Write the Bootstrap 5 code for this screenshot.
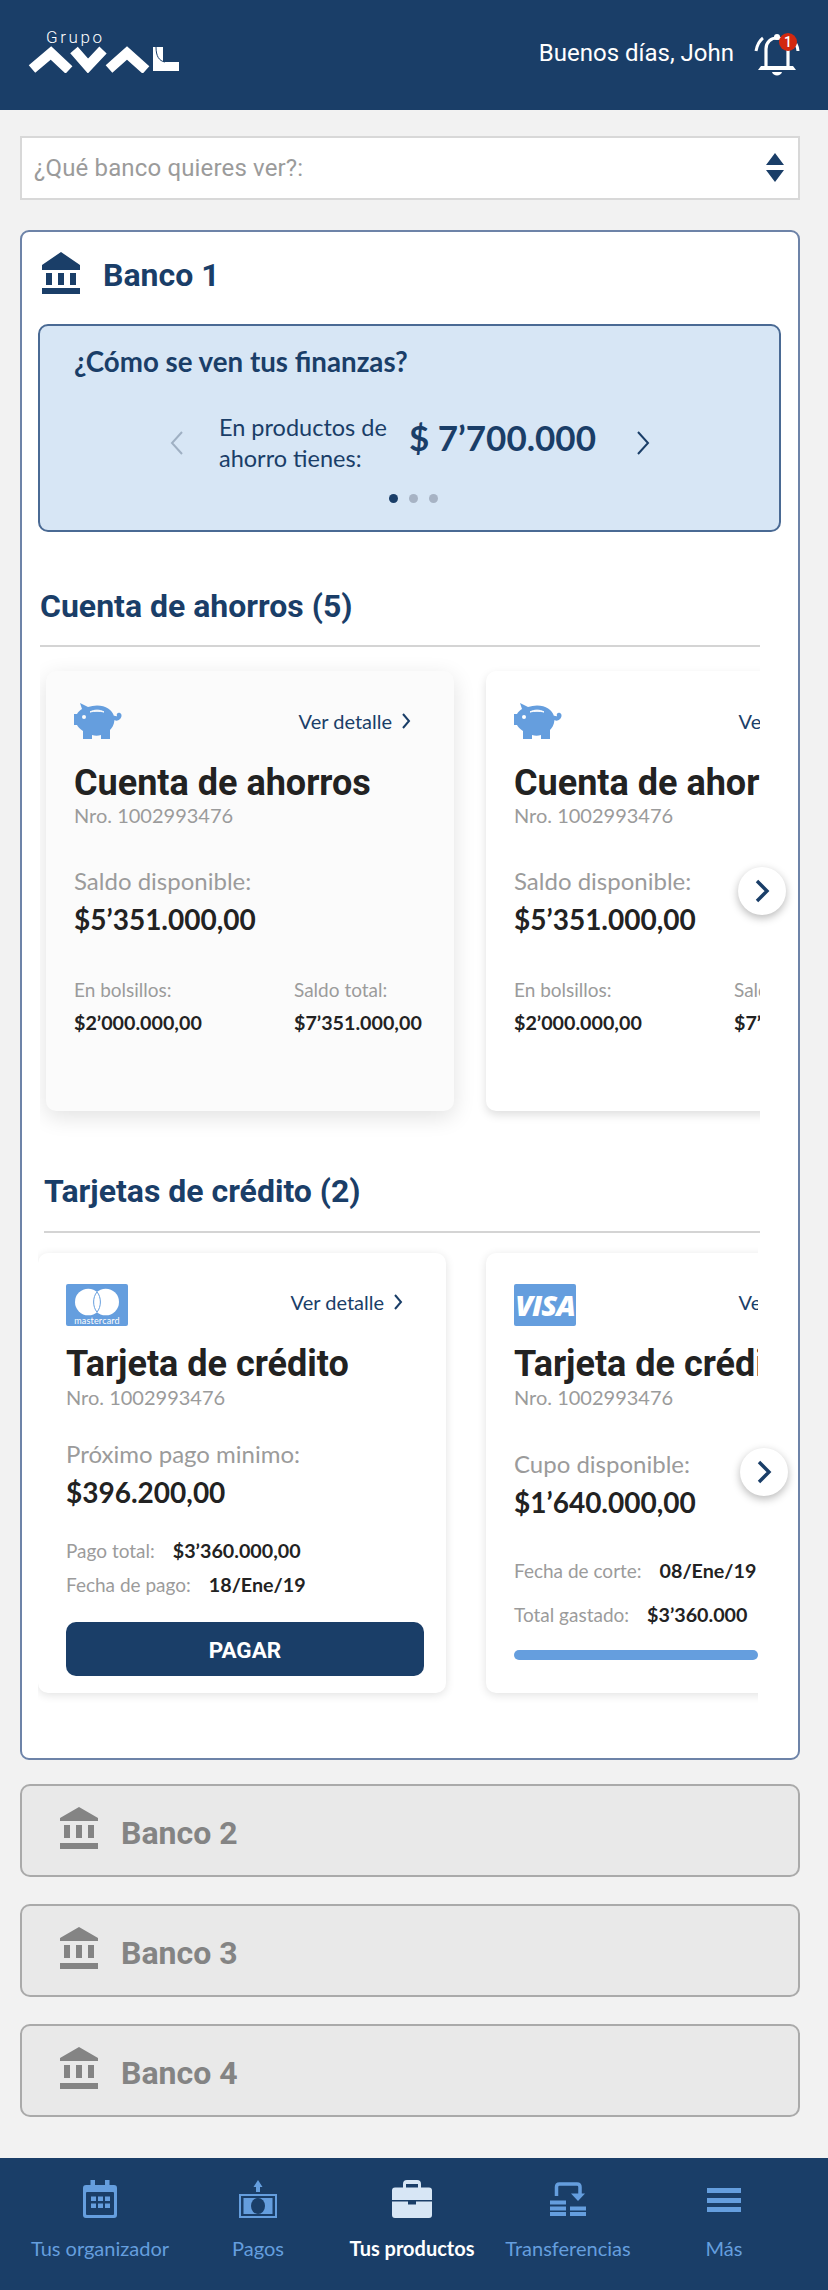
<!DOCTYPE html>
<html lang="es">
<head>
  <title>Grupo Aval - Tus productos</title>
  <meta charset="UTF-8">
  <meta name="viewport" content="width=device-width, initial-scale=1.0">
  <link href="https://cdn.jsdelivr.net/npm/bootstrap@5.3.0/dist/css/bootstrap.min.css" rel="stylesheet">
  <style>
    :root { --navy: #1a3e68; --sky: #659ede; --grey: #9b9b9b; --ink: #222; }
    body { width: 828px; height: 2290px; background: #f2f2f2; font-family: "Lato", sans-serif; color: var(--ink); overflow: hidden; }
    .app-top { height: 110px; background: var(--navy); padding: 29px 28px 0 28px; color: #fff; flex: none; }
    .logo-word { font: 300 17px/16px "Roboto", sans-serif; letter-spacing: 2.6px; margin-left: 18px; }
    .hello { font: 400 24px/32px "Roboto", sans-serif; margin-top: 3px; }
    .bell-wrap { position: relative; width: 46px; height: 46px; margin-left: 20px; }
    .bell-count { position: absolute; top: -1px; right: 3px; width: 18px; height: 18px; border-radius: 50%; background: #d2280f; color: #fff; font: 500 14px/18px "Roboto", sans-serif; text-align: center; }
    .main-col { padding: 26px 28px 0 20px; }
    .bank-pick { height: 64px; background: #fff; border: 2px solid #d8d8d8; padding: 0 14px 0 12px; font: 400 24px/30px "Roboto", sans-serif; letter-spacing: .15px; color: var(--grey); }
    .bank-open { margin-top: 30px; height: 1530px; background: #fff; border: 2px solid #6d83a8; border-radius: 9px; padding: 20px 17px 0 16px; overflow: hidden; }
    .bank-head { height: 42px; gap: 23px; color: var(--navy); font: 700 32px/42px "Roboto", sans-serif; padding-left: 4px; }
    .bank-name { margin-top: 4px; }
    .finance { margin-top: 30px; height: 208px; background: #d7e6f5; border: 2px solid #4a6a94; border-radius: 10px; padding: 18px 34px 0 34px; color: var(--navy); }
    .finance h2 { font: 700 27.7px/36px "Lato", sans-serif; margin: 0; }
    .finance-row { margin-top: 28px; height: 70px; padding-left: 96px; }
    .finance-label { font: 400 23.5px/31px "Lato", sans-serif; width: 190px; margin-left: 36px; }
    .finance-value { font: 700 35px/46px "Lato", sans-serif; width: 228px; white-space: nowrap; margin-top: -12px; }
    .dots { margin-top: 16px; gap: 11px; padding-left: 8px; }
    .dots i { width: 9px; height: 9px; border-radius: 50%; background: #a7b3c4; display: block; }
    .dots i.on { background: var(--navy); }
    .sec-title { font: 700 32px/40px "Roboto", sans-serif; color: var(--navy); margin: 0; }
    .sec-line { height: 2px; background: #d4d4d4; }
    .strip-wrap { position: relative; }
    .strip-clip { overflow: hidden; }
    .prod { flex: none; width: 408px; height: 440px; background: #fff; border-radius: 10px; box-shadow: 0 4px 10px rgba(0,0,0,.13); padding: 32px 28px; }
    .prod-first { background: #fbfbfb; box-shadow: 0 6px 22px rgba(0,0,0,.12); }
    .prod-plain { box-shadow: 0 2px 10px rgba(0,0,0,.12); padding-top: 31px; }
    .prod-top { height: 36px; }
    .prod-title { font: 700 36px/42px "Roboto", sans-serif; color: var(--ink); white-space: nowrap; margin: 23px 0 0 0; }
    .prod-nro { font: 400 20px/24px "Lato", sans-serif; color: var(--grey); white-space: nowrap; margin-top: -1px; }
    .prod-link { font: 400 20px/26px "Lato", sans-serif; color: var(--navy); white-space: nowrap; gap: 10px; margin: 5px 15px 0 0; }
    .big-label { font: 400 24px/30px "Lato", sans-serif; color: var(--grey); white-space: nowrap; margin-top: 39px; }
    .big-value { font: 700 28px/36px "Lato", sans-serif; white-space: nowrap; margin-top: 5px; }
    .small-label { font: 400 19px/24px "Lato", sans-serif; color: var(--grey); white-space: nowrap; }
    .small-value { font: 700 19.7px/24px "Lato", sans-serif; white-space: nowrap; }
    .stack-value { margin-top: 9px; }
    .split-first { width: 220px; }
    .line-pair { gap: 18px; }
    .pay-btn { height: 54px; width: 358px; border-radius: 10px; background: var(--navy); color: #fff; border: 0; font: 700 22.5px/56px "Roboto", sans-serif; padding: 0; margin-top: 25px; display: block; }
    .use-bar { height: 10px; border-radius: 5px; background: var(--sky); width: 244px; margin-top: 23px; }
    .go-next { position: absolute; width: 48px; height: 48px; border-radius: 50%; background: #fff; box-shadow: 0 3px 8px rgba(0,0,0,.28); }
    .card-logo { width: 62px; height: 42px; background: var(--sky); border-radius: 2px; color: #fff; position: relative; overflow: hidden; flex: none; }
    .card-logo-visa { font: italic 800 29px/42px "Open Sans", sans-serif; text-align: center; letter-spacing: -1px; }
    .mc-word { position: absolute; left: 0; right: 0; bottom: 1px; text-align: center; font: 400 9px/9px "Lato", sans-serif; letter-spacing: .2px; }
    .bank-shut { height: 93px; margin-top: 27px; background: #e9e9e9; border: 2px solid #aaa; border-radius: 10px; padding: 0 0 0 38px; color: #848484; font: 700 32px/42px "Roboto", sans-serif; gap: 23px; }
    .bank-shut svg { margin-top: -6px; }
    .bank-shut span { margin-top: 4px; }
    .bottom-tabs { height: 132px; flex: none; background: var(--navy); padding: 22px 0 0 22px; }
    .tab-item { width: 156px; color: var(--sky); font: 400 20px/26px "Lato", sans-serif; white-space: nowrap; text-align: center; }
    .tab-item.on { color: #fff; font-weight: 700; }
    .tab-nudge { padding-left: 4px; }
    .tab-ico { height: 38px; margin-bottom: 17px; }
  </style>
</head>
<body class="d-flex flex-column">
  <header class="app-top d-flex justify-content-between">
    <div>
      <div class="logo-word">Grupo</div>
      <svg width="152" height="27" viewBox="0 0 152 27" class="d-block" style="margin-top:1px">
        <g fill="none" stroke="#fff" stroke-width="10">
          <path d="M4 23 L23 7 L41 24"/>
          <path d="M46 4 L60 20 L75 4"/>
          <path d="M81 23 L99 7 L118 24"/>
        </g>
        <path d="M125 1 H135 V16 H151 V25 H125 Z" fill="#fff"/>
        <path d="M128 1 C128 10 131 15 137 16" fill="none" stroke="#1a3e68" stroke-width="1"/>
      </svg>
    </div>
    <div class="d-flex align-items-start" style="padding-top:5px">
      <span class="hello">Buenos días, John</span>
      <div class="bell-wrap">
        <svg width="46" height="46" viewBox="0 0 46 46" fill="none">
          <path d="M12 34 V15 C12 8 17 4 23 4 C29 4 34 8 34 15 V34" stroke="#fff" stroke-width="3.2"/>
          <circle cx="23" cy="3" r="3" fill="#fff"/>
          <path d="M4 36 L7 32 H39 L42 36 Z" fill="#fff"/>
          <path d="M18 38 H28 C27 42.5 19 42.5 18 38 Z" fill="#fff"/>
          <path d="M2 17 C3 11 5 7 9 4" stroke="#fff" stroke-width="3"/>
          <path d="M44 17 C44 14 43 12 42 10" stroke="#fff" stroke-width="3"/>
        </svg>
        <span class="bell-count">1</span>
      </div>
    </div>
  </header>

  <main class="main-col flex-grow-1">
    <div class="bank-pick d-flex align-items-center justify-content-between">
      <span>¿Qué banco quieres ver?:</span>
      <svg width="18" height="30" viewBox="0 0 18 30"><path d="M9 0 L18 12 H0 Z M0 17 H18 L9 29 Z" fill="#1a3e68"/></svg>
    </div>

    <section class="bank-open">
      <div class="bank-head d-flex align-items-center">
        <svg width="38" height="42" viewBox="0 0 38 42" fill="#1a3e68"><path d="M19 0 L38 13 V18 H0 V13 Z M4 21 H10 V33 H4 Z M16 21 H22 V33 H16 Z M28 21 H34 V33 H28 Z M0 36 H38 V42 H0 Z"/></svg>
        <span class="bank-name">Banco 1</span>
      </div>

      <div class="finance">
        <h2>¿Cómo se ven tus finanzas?</h2>
        <div class="finance-row d-flex align-items-center">
          <svg width="13" height="24" viewBox="0 0 13 24" fill="none" stroke="#9fb0c3" stroke-width="2"><path d="M12 1 L2 12 L12 23"/></svg>
          <div class="finance-label">En productos de ahorro tienes:</div>
          <div class="finance-value">$ 7’700.000</div>
          <svg width="13" height="24" viewBox="0 0 13 24" fill="none" stroke="#1a3e68" stroke-width="2"><path d="M1 1 L11 12 L1 23"/></svg>
        </div>
        <div class="dots d-flex justify-content-center"><i class="on"></i><i></i><i></i></div>
      </div>

      <!-- Cuentas de ahorro -->
      <h3 class="sec-title" style="margin-top:54px;padding-left:2px">Cuenta de ahorros (5)</h3>
      <div class="sec-line" style="margin:19px 0 0 2px;width:720px"></div>

      <div class="strip-wrap" style="margin-left:2px;width:720px">
        <div class="strip-clip d-flex" style="padding:24px 0 60px 6px;gap:32px">
          <article class="prod prod-first">
            <div class="prod-top d-flex justify-content-between">
              <svg width="48" height="36" viewBox="0 0 48 36" fill="#659ede"><path d="M6 0 L14 4 C17 3 20 2.5 23 2.5 C32 2.5 38 7 40 13 C41 12 42 14 43 13 C42 11 44 9 46 10 C48 11 48 14 46 16 C44 18 42 18 40.5 17 C40 22 38 25 36 27 V36 H27 V32 C24 33 21 33 18 32 V36 H9 V28 C6 26 4 24 3 22 H0 V11 H3 C4 9 6 7 8 6 Z"/><path d="M16 9 C20 6.5 26 6.5 30 9 C26 8 20 8 16 9 Z" fill="#fbfbfb" stroke="#fbfbfb" stroke-width="1"/><circle cx="10" cy="14" r="2" fill="#fbfbfb"/></svg>
              <span class="prod-link d-flex align-items-center align-self-start">Ver detalle
                <svg width="9" height="16" viewBox="0 0 9 16" fill="none" stroke="#1a3e68" stroke-width="2"><path d="M1 1 L7 8 L1 15"/></svg></span>
            </div>
            <h4 class="prod-title">Cuenta de ahorros</h4>
            <div class="prod-nro">Nro. 1002993476</div>
            <div class="big-label">Saldo disponible:</div>
            <div class="big-value">$5’351.000,00</div>
            <div class="d-flex" style="margin-top:41px">
              <div class="split-first"><div class="small-label">En bolsillos:</div><div class="small-value stack-value">$2’000.000,00</div></div>
              <div><div class="small-label">Saldo total:</div><div class="small-value stack-value">$7’351.000,00</div></div>
            </div>
          </article>
          <article class="prod">
            <div class="prod-top d-flex justify-content-between">
              <svg width="48" height="36" viewBox="0 0 48 36" fill="#659ede"><path d="M6 0 L14 4 C17 3 20 2.5 23 2.5 C32 2.5 38 7 40 13 C41 12 42 14 43 13 C42 11 44 9 46 10 C48 11 48 14 46 16 C44 18 42 18 40.5 17 C40 22 38 25 36 27 V36 H27 V32 C24 33 21 33 18 32 V36 H9 V28 C6 26 4 24 3 22 H0 V11 H3 C4 9 6 7 8 6 Z"/><path d="M16 9 C20 6.5 26 6.5 30 9 C26 8 20 8 16 9 Z" fill="#fff" stroke="#fff" stroke-width="1"/><circle cx="10" cy="14" r="2" fill="#fff"/></svg>
              <span class="prod-link d-flex align-items-center align-self-start">Ver detalle
                <svg width="9" height="16" viewBox="0 0 9 16" fill="none" stroke="#1a3e68" stroke-width="2"><path d="M1 1 L7 8 L1 15"/></svg></span>
            </div>
            <h4 class="prod-title">Cuenta de ahorros</h4>
            <div class="prod-nro">Nro. 1002993476</div>
            <div class="big-label">Saldo disponible:</div>
            <div class="big-value">$5’351.000,00</div>
            <div class="d-flex" style="margin-top:41px">
              <div class="split-first"><div class="small-label">En bolsillos:</div><div class="small-value stack-value">$2’000.000,00</div></div>
              <div><div class="small-label">Saldo total:</div><div class="small-value stack-value">$7’351.000,00</div></div>
            </div>
          </article>
        </div>
        <div class="go-next d-flex align-items-center justify-content-center" style="left:698px;top:220px">
          <svg width="16" height="24" viewBox="0 0 16 24" fill="none" stroke="#1a3e68" stroke-width="3.4"><path d="M3 2 L13 12 L3 22"/></svg>
        </div>
      </div>

      <!-- Tarjetas de credito -->
      <h3 class="sec-title" style="padding-left:6px">Tarjetas de crédito (2)</h3>
      <div class="sec-line" style="margin:20px 0 0 6px;width:716px"></div>

      <div class="strip-wrap" style="width:720px">
        <div class="strip-clip d-flex" style="padding:20px 0 30px 0;gap:40px">
          <article class="prod prod-plain">
            <div class="d-flex justify-content-between">
              <div class="card-logo">
                <svg width="62" height="32" viewBox="0 0 62 32" class="d-block">
                  <circle cx="22.3" cy="18" r="13.3" fill="#fff"/><circle cx="39.7" cy="18" r="13.3" fill="#fff"/>
                  <path d="M31 8 C26.5 13 26.5 23 31 28 C35.5 23 35.5 13 31 8 Z" fill="#fff" stroke="#659ede" stroke-width="1"/>
                </svg>
                <span class="mc-word">mastercard</span>
              </div>
              <span class="prod-link d-flex align-items-center align-self-start">Ver detalle
                <svg width="9" height="16" viewBox="0 0 9 16" fill="none" stroke="#1a3e68" stroke-width="2"><path d="M1 1 L7 8 L1 15"/></svg></span>
            </div>
            <h4 class="prod-title" style="margin-top:17px">Tarjeta de crédito</h4>
            <div class="prod-nro" style="margin-top:0">Nro. 1002993476</div>
            <div class="big-label" style="margin-top:30px">Próximo pago minimo:</div>
            <div class="big-value">$396.200,00</div>
            <div class="d-flex line-pair" style="margin-top:29px"><span class="small-label">Pago total:</span><span class="small-value">$3’360.000,00</span></div>
            <div class="d-flex line-pair" style="margin-top:10px"><span class="small-label">Fecha de pago:</span><span class="small-value">18/Ene/19</span></div>
            <button type="button" class="btn pay-btn">PAGAR</button>
          </article>
          <article class="prod prod-plain">
            <div class="d-flex justify-content-between">
              <div class="card-logo card-logo-visa">VISA</div>
              <span class="prod-link d-flex align-items-center align-self-start">Ver detalle
                <svg width="9" height="16" viewBox="0 0 9 16" fill="none" stroke="#1a3e68" stroke-width="2"><path d="M1 1 L7 8 L1 15"/></svg></span>
            </div>
            <h4 class="prod-title" style="margin-top:17px">Tarjeta de crédito</h4>
            <div class="prod-nro" style="margin-top:0">Nro. 1002993476</div>
            <div class="big-label" style="margin-top:40px">Cupo disponible:</div>
            <div class="big-value">$1’640.000,00</div>
            <div class="d-flex line-pair" style="margin-top:39px"><span class="small-label">Fecha de corte:</span><span class="small-value">08/Ene/19</span></div>
            <div class="d-flex line-pair" style="margin-top:20px"><span class="small-label">Total gastado:</span><span class="small-value">$3’360.000</span></div>
            <div class="use-bar"></div>
          </article>
        </div>
        <div class="go-next d-flex align-items-center justify-content-center" style="left:702px;top:215px">
          <svg width="16" height="24" viewBox="0 0 16 24" fill="none" stroke="#1a3e68" stroke-width="3.4"><path d="M3 2 L13 12 L3 22"/></svg>
        </div>
      </div>
    </section>

    <div class="bank-shut d-flex align-items-center" style="margin-top:24px">
      <svg width="38" height="42" viewBox="0 0 38 42" fill="#848484"><path d="M19 0 L38 11 V14 H0 V11 Z M4 18 H10 V31 H4 Z M16 18 H22 V31 H16 Z M28 18 H34 V31 H28 Z M0 36 H38 V42 H0 Z"/></svg>
      <span>Banco 2</span>
    </div>
    <div class="bank-shut d-flex align-items-center">
      <svg width="38" height="42" viewBox="0 0 38 42" fill="#848484"><path d="M19 0 L38 11 V14 H0 V11 Z M4 18 H10 V31 H4 Z M16 18 H22 V31 H16 Z M28 18 H34 V31 H28 Z M0 36 H38 V42 H0 Z"/></svg>
      <span>Banco 3</span>
    </div>
    <div class="bank-shut d-flex align-items-center">
      <svg width="38" height="42" viewBox="0 0 38 42" fill="#848484"><path d="M19 0 L38 11 V14 H0 V11 Z M4 18 H10 V31 H4 Z M16 18 H22 V31 H16 Z M28 18 H34 V31 H28 Z M0 36 H38 V42 H0 Z"/></svg>
      <span>Banco 4</span>
    </div>
  </main>

  <nav class="bottom-tabs d-flex">
    <div class="tab-item">
      <div class="tab-ico d-flex justify-content-center">
        <svg width="34" height="38" viewBox="0 0 34 38"><path d="M7.5 0 H12 V5 H22 V0 H26.5 V5 H31 Q34 5 34 8 V35 Q34 38 31 38 H3 Q0 38 0 35 V8 Q0 5 3 5 H7.5 Z" fill="#659ede"/><rect x="3" y="12" width="28" height="23" rx="1" fill="#1a3e68"/><path d="M8 16.5 h5 v4.5 h-5z M15 16.5 h5 v4.5 h-5z M22 16.5 h5 v4.5 h-5z M8 23.5 h5 v4.5 h-5z M15 23.5 h5 v4.5 h-5z M22 23.5 h5 v4.5 h-5z" fill="#659ede"/></svg>
      </div>
      Tus organizador
    </div>
    <div class="tab-item tab-nudge">
      <div class="tab-ico d-flex justify-content-center">
        <svg width="38" height="38" viewBox="0 0 38 38"><path d="M19 0 L23.5 7 H21 V12 H17 V7 H14.5 Z" fill="#659ede"/><path d="M0 14 H38 V38 H0 Z M2 16 V36 H36 V16 Z" fill="#659ede" fill-rule="evenodd"/><rect x="4.5" y="18" width="29" height="16" fill="#659ede"/><ellipse cx="19" cy="26" rx="7" ry="8" fill="#1a3e68"/></svg>
      </div>
      Pagos
    </div>
    <div class="tab-item on">
      <div class="tab-ico d-flex justify-content-center">
        <svg width="40" height="38" viewBox="0 0 40 38"><path d="M11 8 V4 Q11 0 15 0 H25 Q29 0 29 4 V8 H26 V4 H14 V8 Z" fill="#d7e6f5"/><path d="M3 7.5 H37 Q40 7.5 40 10.5 V20 H0 V10.5 Q0 7.5 3 7.5 Z M0 21.5 H16 V24.5 H24 V21.5 H40 V35 Q40 38 37 38 H3 Q0 38 0 35 Z" fill="#d7e6f5"/></svg>
      </div>
      Tus productos
    </div>
    <div class="tab-item">
      <div class="tab-ico d-flex justify-content-center">
        <svg width="36" height="38" viewBox="0 0 36 38"><path d="M6.5 16 V7 Q6.5 4 9.5 4 H27 Q30 4 30 7 V14" fill="none" stroke="#659ede" stroke-width="3.5"/><path d="M21 13.5 H35 L28 21 Z" fill="#659ede"/><path d="M0 20.5 H16 V24.5 H0 Z M0 26.5 H16 V30.5 H0 Z M20 26.5 H36 V30.5 H20 Z M0 32 H16 V36 H0 Z M20 32 H36 V36 H20 Z" fill="#659ede"/></svg>
      </div>
      Transferencias
    </div>
    <div class="tab-item">
      <div class="tab-ico d-flex justify-content-center">
        <svg width="34" height="38" viewBox="0 0 34 38"><path d="M0 8 H34 V13 H0 Z M0 18 H34 V23 H0 Z M0 27 H34 V32 H0 Z" fill="#659ede"/></svg>
      </div>
      Más
    </div>
  </nav>
</body>
</html>
